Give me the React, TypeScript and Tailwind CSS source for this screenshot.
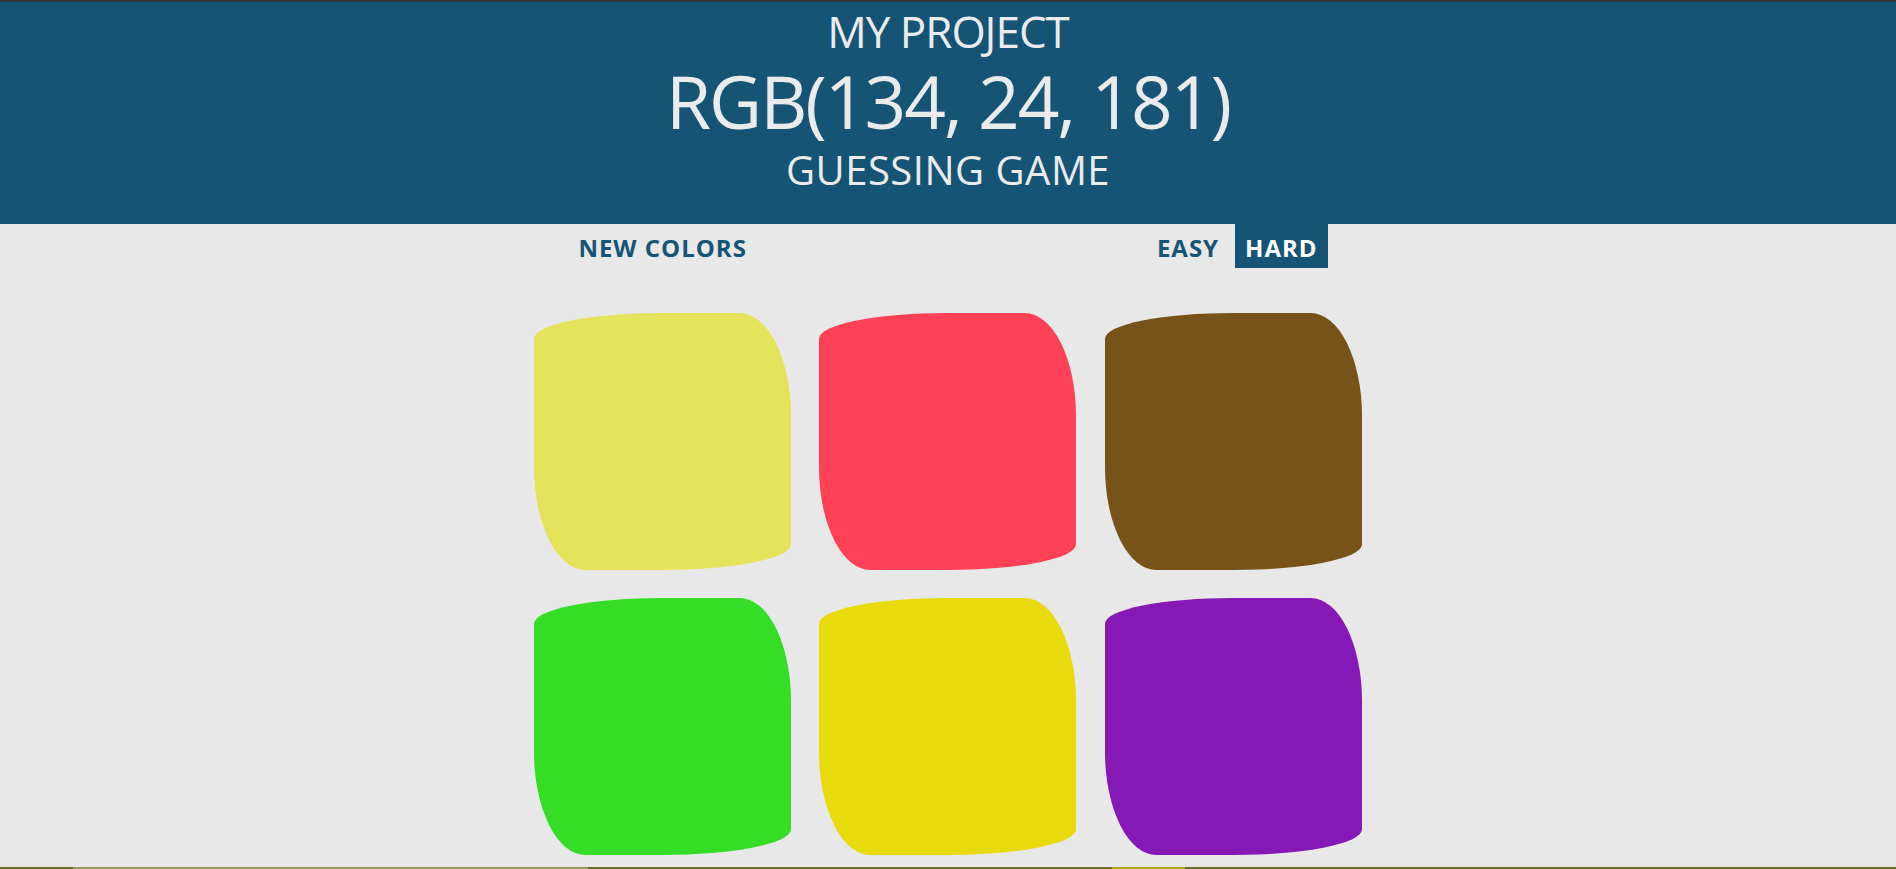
import React from "react";

const squares = ["#e5e35b", "#ff4157", "#775219", "#36dd27", "#e8da0c", "#8618b5"];

export default function App() {
  return (
    <div className="flex h-[869px] flex-col overflow-hidden bg-[#e8e8e8] font-['Open_Sans',sans-serif]">
      <div className="h-[2px] bg-[#31373b]" />
      <header className="flex flex-col items-center bg-[#155475] pt-[6px] pb-[32px] font-normal uppercase text-[#ebebeb]">
        <h1 className="text-[44px] leading-[46px] tracking-[-1px]">My Project</h1>
        <h2 className="mt-[8px] text-[73px] leading-[78px] tracking-[-2px]">RGB(134, 24, 181)</h2>
        <h3 className="mt-[8px] text-[40px] leading-[44px] tracking-[0.5px]">Guessing Game</h3>
      </header>

      <div className="flex h-[44px] justify-center bg-[#e8e8e8] text-[24px] font-bold uppercase tracking-[1px] text-[#155475]">
        <button className="h-full px-[10px] pt-[3px] uppercase">New Colors</button>
        <span className="w-[390px]" />
        <button className="h-full px-[10px] pt-[3px] uppercase">Easy</button>
        <button className="ml-[6px] h-full bg-[#155475] px-[10px] pt-[3px] uppercase text-white">Hard</button>
      </div>

      <main className="flex-1">
        <div className="mx-auto mt-[45px] grid w-[828px] grid-cols-3 gap-[28px]">
          {squares.map((c) => (
            <div
              key={c}
              className="h-[257px] w-[257px] rounded-[50%_20%/10%_40%]"
              style={{ backgroundColor: c }}
            />
          ))}
        </div>
      </main>

      <div className="flex h-[2px]">
        <div className="w-[73px] bg-[#6b6a2a]" />
        <div className="w-[515px] bg-[#9a9760]" />
        <div className="w-[524px] bg-[#6e6d2e]" />
        <div className="w-[73px] bg-[#a8a419]" />
        <div className="flex-1 bg-[#6c6b2c]" />
      </div>
    </div>
  );
}
